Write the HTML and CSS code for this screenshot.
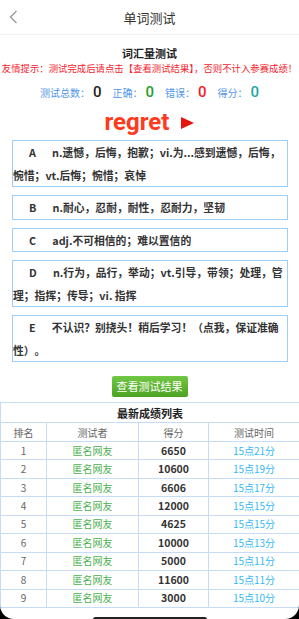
FILE: index.html
```html
<!DOCTYPE html>
<html lang="zh">
<head>
<meta charset="utf-8">
<title>单词测试</title>
<link rel="stylesheet" href="styles.css">
</head>
<body>
<div class="nav">
  <span class="back"><svg width="9" height="14" viewBox="0 0 9 14"><path d="M7.5 1 L1.5 7 L7.5 13" fill="none" stroke="#9a9a9a" stroke-width="1.4"/></svg></span>
  <span class="nav-title">单词测试</span>
  <span></span>
</div>
<div class="heading">词汇量测试</div>
<div class="tip">友情提示：测试完成后请点击【查看测试结果】，否则不计入参赛成绩！</div>
<div class="stats">
  <span>测试总数：</span><span class="num n-total">0</span>
  <span>正确：</span><span class="num n-ok">0</span>
  <span>错误：</span><span class="num n-err">0</span>
  <span>得分：</span><span class="num n-score">0</span>
</div>
<div class="word"><span class="word-text">regret</span><span class="play"></span></div>
<div class="options">
  <div class="opt">A&emsp;&ensp;n.遗憾，后悔，抱歉；vi.为...感到遗憾，后悔，惋惜；vt.后悔；惋惜；哀悼</div>
  <div class="opt">B&emsp;&ensp;n.耐心，忍耐，耐性，忍耐力，坚韧</div>
  <div class="opt">C&emsp;&ensp;adj.不可相信的；难以置信的</div>
  <div class="opt">D&emsp;&ensp;n.行为，品行，举动；vt.引导，带领；处理，管理；指挥；传导；vi. 指挥</div>
  <div class="opt">E&emsp;&ensp;不认识？别挠头！稍后学习！（点我，保证准确性）。</div>
</div>
<div class="btn-wrap"><span class="btn">查看测试结果</span></div>
<table class="rank">
  <colgroup><col class="c1"><col class="c2"><col class="c3"><col class="c4"></colgroup>
  <tr class="cap"><td colspan="4">最新成绩列表</td></tr>
  <tr class="head"><th>排名</th><th>测试者</th><th>得分</th><th>测试时间</th></tr>
  <tr class="row"><td>1</td><td class="name">匿名网友</td><td class="score">6650</td><td class="time">15点21分</td></tr>
  <tr class="row"><td>2</td><td class="name">匿名网友</td><td class="score">10600</td><td class="time">15点19分</td></tr>
  <tr class="row"><td>3</td><td class="name">匿名网友</td><td class="score">6606</td><td class="time">15点17分</td></tr>
  <tr class="row"><td>4</td><td class="name">匿名网友</td><td class="score">12000</td><td class="time">15点15分</td></tr>
  <tr class="row"><td>5</td><td class="name">匿名网友</td><td class="score">4625</td><td class="time">15点15分</td></tr>
  <tr class="row"><td>6</td><td class="name">匿名网友</td><td class="score">10000</td><td class="time">15点13分</td></tr>
  <tr class="row"><td>7</td><td class="name">匿名网友</td><td class="score">5000</td><td class="time">15点11分</td></tr>
  <tr class="row"><td>8</td><td class="name">匿名网友</td><td class="score">11600</td><td class="time">15点11分</td></tr>
  <tr class="row"><td>9</td><td class="name">匿名网友</td><td class="score">3000</td><td class="time">15点10分</td></tr>
</table>
<div class="frame"></div>
<div class="home"></div>
</body>
</html>
```
FILE: styles.css
```css
* { box-sizing: border-box; }
html, body { margin: 0; padding: 0; }
body {
  width: 299px;
  height: 619px;
  overflow: hidden;
  background: #fff;
  font-family: "Noto Sans CJK SC", sans-serif;
  color: #333;
}
.nav {
  height: 35px;
  display: grid;
  grid-template-columns: 1fr auto 1fr;
  align-items: center;
  border-bottom: 1px solid #f1f1f1;
}
.back { padding-left: 9px; display: flex; }
.nav-title { font-size: 13px; color: #333; }

.heading {
  padding-top: 10px;
  text-align: center;
  font-weight: bold;
  font-size: 11px;
  line-height: 16px;
  color: #222;
}
.tip {
  font-size: 9.4px;
  line-height: 14px;
  color: #f5222d;
  text-align: center;
  white-space: nowrap;
  overflow: hidden;
}
.stats {
  margin-top: 7px;
  height: 20px;
  display: flex;
  justify-content: center;
  align-items: center;
  font-size: 10px;
  color: #5196ea;
}
.num {
  font-family: Roboto, sans-serif;
  font-size: 15px;
  font-weight: 500;
  margin: 0 11px 0 3px;
}
.num.n-score { margin-right: 0; }
.n-total { color: #222; }
.n-ok { color: #27a02a; }
.n-err { color: #f51c1c; }
.n-score { color: #1ea7a4; }

.word {
  margin-top: 5px;
  height: 30px;
  display: flex;
  justify-content: center;
  align-items: center;
}
.word-text {
  font-family: Roboto, sans-serif;
  font-weight: bold;
  font-size: 24px;
  color: #ff3b1d;
}
.play {
  width: 0;
  height: 0;
  border-left: 13px solid #e5140c;
  border-top: 6px solid transparent;
  border-bottom: 6px solid transparent;
  margin-left: 12px;
  margin-top: 2px;
}

.options { margin-top: 3px; }
.opt {
  margin: 0 11px 8px 12px;
  border: 1px solid #9fcdf3;
  font-size: 10.8px;
  font-weight: bold;
  line-height: 22.5px;
  color: #333;
  padding: 0;
  text-indent: 16px;
  text-spacing-trim: space-all;
}

.btn-wrap { text-align: center; margin-top: 10px; height: 21px; }
.btn {
  display: inline-block;
  height: 21px;
  line-height: 21px;
  padding: 0 5px;
  font-size: 11px;
  color: #fff;
  background: linear-gradient(#72c845, #4ba322);
  border-radius: 2px;
}

.rank {
  margin-top: 9px;
  width: 299px;
  border-collapse: collapse;
  table-layout: fixed;
  text-align: center;
  font-size: 10px;
}
.c1 { width: 46px; }
.c2 { width: 92px; }
.c3 { width: 70px; }
.c4 { width: 91px; }
.rank td, .rank th {
  border: 1px solid #c6dcf6;
  padding: 0;
}
.cap td {
  height: 20px;
  font-size: 11px;
  font-weight: bold;
  color: #222;
}
.head th {
  height: 19px;
  font-weight: normal;
  color: #666;
}
.row td {
  height: 18.44px;
  line-height: 14px;
  color: #666;
}
.row td.name { color: #4cb050; }
.row td.score { color: #333; font-weight: bold; font-size: 10.5px; }
.row td.time { color: #34b8f4; }

.frame {
  position: fixed;
  left: 0;
  top: 0;
  right: 0;
  bottom: 0;
  border-radius: 0 0 14px 14px;
  box-shadow: 0 0 0 30px #000;
  pointer-events: none;
}
.home {
  position: fixed;
  left: 93px;
  width: 114px;
  bottom: -3px;
  height: 5px;
  border-radius: 3px;
  background: #222;
}
```
